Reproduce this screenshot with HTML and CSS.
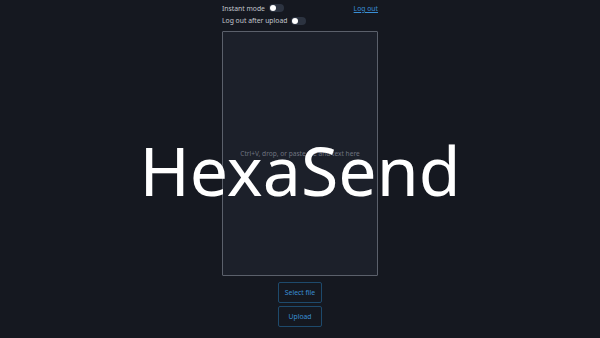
FILE: index.html
```html
<!DOCTYPE html>
<html>
<head>
<meta charset="utf-8">
<link rel="stylesheet" href="styles.css">
</head>
<body>
<div class="app">
  <div class="row">
    <span class="label">Instant mode</span>
    <span class="toggle"><span class="knob"></span></span>
    <a class="logout" href="#">Log out</a>
  </div>
  <div class="row">
    <span class="label">Log out after upload</span>
    <span class="toggle"><span class="knob"></span></span>
  </div>
  <div class="drop">
    <span class="placeholder">Ctrl+V, drop, or paste file and text here</span>
  </div>
  <div class="buttons">
    <button class="btn">Select file</button>
    <button class="btn">Upload</button>
  </div>
</div>
<div class="splash">HexaSend</div>
</body>
</html>
```
FILE: styles.css
```css
html, body {
  margin: 0;
  padding: 0;
  height: 100%;
  background: #151820;
  font-family: "Noto Sans", sans-serif;
  overflow: hidden;
}
.app {
  width: 156px;
  margin: 0 auto;
  padding-top: 2px;
}
.row {
  display: flex;
  align-items: center;
  height: 12.5px;
  font-size: 6.8px;
  color: #c3c7ce;
}
.label {
  margin-right: 4px;
}
.toggle {
  display: inline-flex;
  align-items: center;
  width: 15px;
  height: 8px;
  border-radius: 4px;
  background: #2c3340;
  padding: 0 1px;
  box-sizing: border-box;
}
.knob {
  width: 6px;
  height: 6px;
  border-radius: 50%;
  background: #ffffff;
}
.logout {
  margin-left: auto;
  color: #3a8fd6;
  text-decoration: underline;
}
.drop {
  margin-top: 4px;
  height: 245px;
  box-sizing: border-box;
  border: 1px solid #5b606b;
  border-radius: 1px;
  background: #1c202a;
  display: flex;
  align-items: center;
  justify-content: center;
}
.placeholder {
  font-size: 6.6px;
  color: #6f7480;
  margin-top: -1px;
}
.buttons {
  display: flex;
  flex-direction: column;
  align-items: center;
  gap: 3px;
  margin-top: 6px;
}
.btn {
  width: 44px;
  height: 21px;
  padding: 0;
  background: transparent;
  border: 1px solid #1e4a6c;
  border-radius: 2px;
  color: #3a8fd6;
  font-family: "Noto Sans", sans-serif;
  font-size: 6.8px;
}
.splash {
  position: fixed;
  inset: 0;
  display: flex;
  align-items: center;
  justify-content: center;
  color: #ffffff;
  font-size: 68px;
  font-family: "Noto Sans", sans-serif;
  pointer-events: none;
}
```
